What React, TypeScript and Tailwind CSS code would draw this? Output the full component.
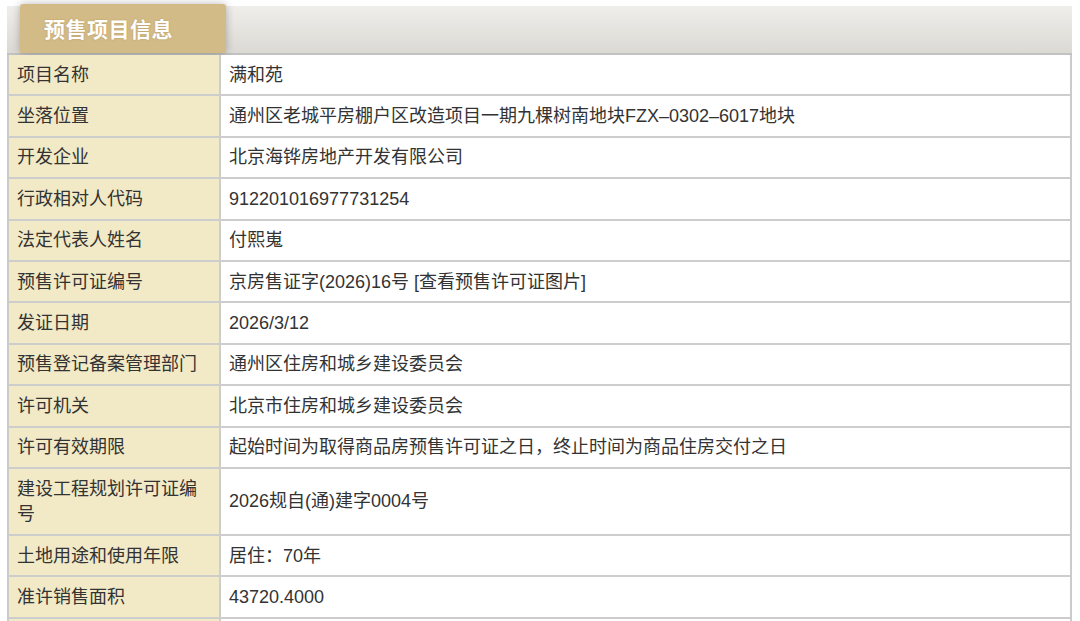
const rows: { label: string; value: string; tall?: boolean }[] = [
  { label: "项目名称", value: "满和苑" },
  { label: "坐落位置", value: "通州区老城平房棚户区改造项目一期九棵树南地块FZX–0302–6017地块" },
  { label: "开发企业", value: "北京海铧房地产开发有限公司" },
  { label: "行政相对人代码", value: "912201016977731254" },
  { label: "法定代表人姓名", value: "付熙嵬" },
  { label: "预售许可证编号", value: "京房售证字(2026)16号 [查看预售许可证图片]" },
  { label: "发证日期", value: "2026/3/12" },
  { label: "预售登记备案管理部门", value: "通州区住房和城乡建设委员会" },
  { label: "许可机关", value: "北京市住房和城乡建设委员会" },
  { label: "许可有效期限", value: "起始时间为取得商品房预售许可证之日，终止时间为商品住房交付之日" },
  { label: "建设工程规划许可证编号", value: "2026规自(通)建字0004号", tall: true },
  { label: "土地用途和使用年限", value: "居住：70年" },
  { label: "准许销售面积", value: "43720.4000" },
  { label: "", value: "" },
];

export default function App() {
  return (
    <div
      className="h-[621px] w-[1080px] overflow-hidden bg-white pt-[6px] text-[#333]"
      style={{ fontFamily: '"Liberation Sans", "Noto Sans CJK SC", sans-serif' }}
    >
      <div className="ml-[7px] w-[1065px]">
        {/* header band with tab */}
        <div className="flex h-[49px] border-b-2 border-[#c2c2c2] bg-gradient-to-b from-[#efeeea] to-[#dbd9d4] pl-[13px]">
          <div className="-mt-[2px] flex h-[49px] w-[206px] items-center rounded-t-[3px] bg-[#d3bb87] pl-[24px] pt-[2px] shadow-[0_0_9px_rgba(0,0,0,0.28)]">
            <span className="text-[21px] font-bold tracking-[0.5px] text-white [text-shadow:0_0_2px_rgba(120,90,40,0.35)]">
              预售项目信息
            </span>
          </div>
        </div>

        {/* table */}
        <div className="border-x-2 border-[#cbcbcb]">
          {rows.map((row, i) => (
            <div
              key={i}
              className={
                "grid grid-cols-[212px_1fr] border-b-2 border-[#cdcdcd] text-[18px] " +
                (row.tall ? "h-[67px]" : "h-[41.4px]")
              }
            >
              <div className="flex items-center border-r-2 border-[#cdcdcd] bg-[#f2e9c6] pl-[8px] pr-[14px] pt-[1px] leading-[25px]">
                {row.label}
              </div>
              <div className="flex items-center bg-white pl-[8px] pt-[1px] leading-[25px]">{row.value}</div>
            </div>
          ))}
        </div>
      </div>
    </div>
  );
}
